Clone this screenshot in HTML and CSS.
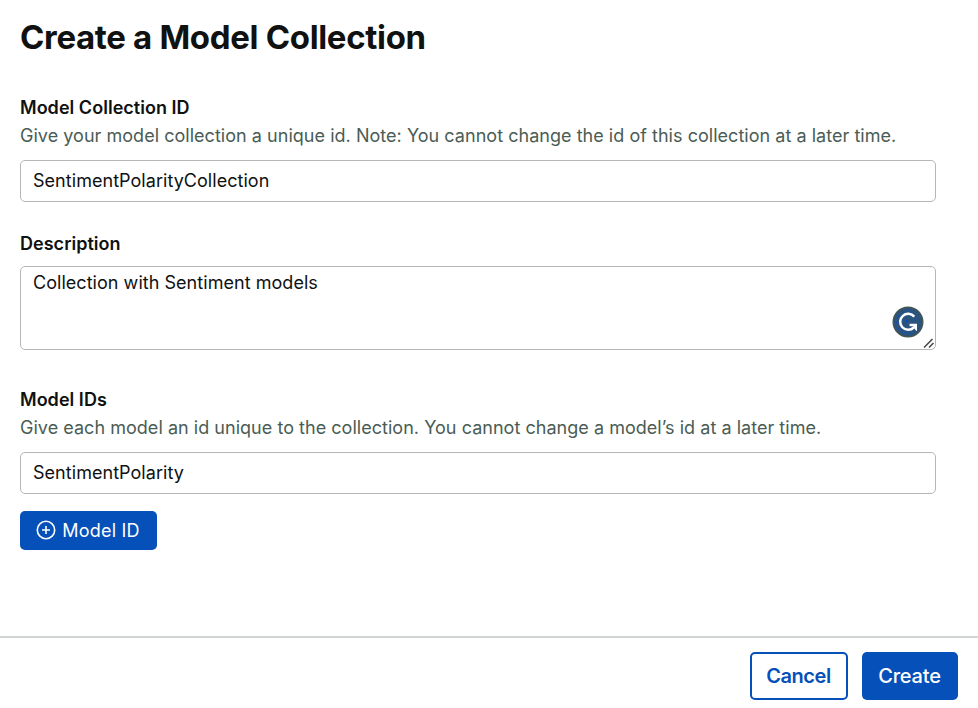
FILE: index.html
```html
<!DOCTYPE html>
<html lang="en">
<head>
<meta charset="utf-8">
<title>Create a Model Collection</title>
<link rel="stylesheet" href="styles.css">
</head>
<body>
<form class="dialog">
  <main class="content">
    <h1 class="title">Create a Model Collection</h1>
    <section class="field field-id">
      <label class="label" for="cid">Model Collection ID</label>
      <p class="hint">Give your model collection a unique id. Note: You cannot change the id of this collection at a later time.</p>
      <input class="input" id="cid" type="text" value="SentimentPolarityCollection">
    </section>
    <section class="field field-desc">
      <label class="label" for="desc">Description</label>
      <div class="area-wrap">
        <textarea class="area" id="desc">Collection with Sentiment models</textarea>
        <svg class="assistant" viewBox="0 0 32 32" aria-hidden="true">
          <circle cx="16" cy="16" r="15.5" fill="#465651"/>
          <circle cx="16" cy="16" r="14" fill="#2b5380"/>
          <path d="M11 5h1v1h-1zM16 4h1v1h-1zM21 6h1v1h-1zM6 10h1v1H6zM4 16h1v1H4zM6 22h1v1H6zM12 26h1v1h-1zM18 27h1v1h-1zM24 24h1v1h-1zM27 13h1v1h-1zM14 14h2v2h-2zM17 12h1v1h-1zM13 18h1v1h-1z" fill="#0b50c0"/>
          <path d="M22.3 10.6A8 8 0 1 0 21.8 21.5L24 19" fill="none" stroke="#fff" stroke-width="2.5"/>
          <path d="M17.5 17.8H25V25.2L22.6 23V20.2H17.5Z" fill="#fff"/>
        </svg>
        <svg class="grip" viewBox="0 0 12 12" aria-hidden="true"><path d="M1 10.500l8.500-8.500M6 10.500l4.500-4.500" fill="none" stroke="#444" stroke-width="1.500"/></svg>
      </div>
    </section>
    <section class="field field-models">
      <label class="label" for="mid">Model IDs</label>
      <p class="hint">Give each model an id unique to the collection. You cannot change a model’s id at a later time.</p>
      <input class="input" id="mid" type="text" value="SentimentPolarity">
      <button class="button add" type="button">
        <svg class="plus" viewBox="0 0 20 20" aria-hidden="true"><circle cx="10" cy="10" r="8.7"/><path d="M10 6v8M6 10h8"/></svg>
        <span>Model ID</span>
      </button>
    </section>
  </main>
  <footer class="footer">
    <button class="button cancel" type="button">Cancel</button>
    <button class="button create" type="button">Create</button>
  </footer>
</form>
</body>
</html>
```
FILE: styles.css
```css
* { box-sizing: border-box; }
body { margin: 0; background: #fff; color: #101111; font-family: Inter, "Liberation Sans", sans-serif; }
.dialog { height: 708px; display: flex; flex-direction: column; }
.content { flex: 1; padding: 17px 42px 0 20px; }
.title { margin: 0; font-size: 33px; line-height: 40px; font-weight: 700; letter-spacing: -0.33px; white-space: nowrap; }
.field { display: flex; flex-direction: column; }
.field-id { margin-top: 39px; }
.field-desc { margin-top: 30px; }
.field-models { margin-top: 38px; }
.label { font-size: 18px; line-height: 24px; font-weight: 600; letter-spacing: 0.03px; }
.hint { margin: 4px 0 0; font-size: 18px; line-height: 24px; letter-spacing: 0.032px; color: #4a5c54; white-space: nowrap; }
.input, .area { width: 100%; border: 1px solid #b5b7b6; border-radius: 5px; background: #fff; color: #101111; font: 400 18px/24px Inter, sans-serif; letter-spacing: 0.04px; outline: 0; }
.input { height: 42px; margin-top: 12px; padding: 0 12px 2px; }
.area-wrap { position: relative; height: 84px; margin-top: 10px; }
.area { display: block; height: 84px; padding: 4px 12px; resize: none; }
.assistant { position: absolute; width: 32px; height: 32px; right: 12px; top: 40px; }
.grip { position: absolute; width: 12px; height: 12px; right: 1px; bottom: 1px; }
.button { display: flex; align-items: center; justify-content: center; border: 0; border-radius: 5px; background: #0550b9; color: #fff; font-family: Inter, sans-serif; }
.add { width: 137px; height: 39px; margin-top: 17px; padding: 0 1px 1px 0; gap: 6px; font-size: 18px; letter-spacing: 0.2px; }
.plus { width: 20px; height: 20px; fill: none; stroke: #fff; stroke-width: 1.6; }
.footer { height: 72px; border-top: 2px solid #d0d5d3; padding: 14px 20px 0; display: flex; justify-content: flex-end; gap: 14px; }
.cancel, .create { height: 48px; padding: 0 1px 0 0; font-size: 20px; font-weight: 500; }
.cancel { width: 98px; border: 2px solid #0550b9; background: #fff; color: #0550b9; font-weight: 600; letter-spacing: -0.45px; }
.create { width: 96px; letter-spacing: -0.2px; }
```
